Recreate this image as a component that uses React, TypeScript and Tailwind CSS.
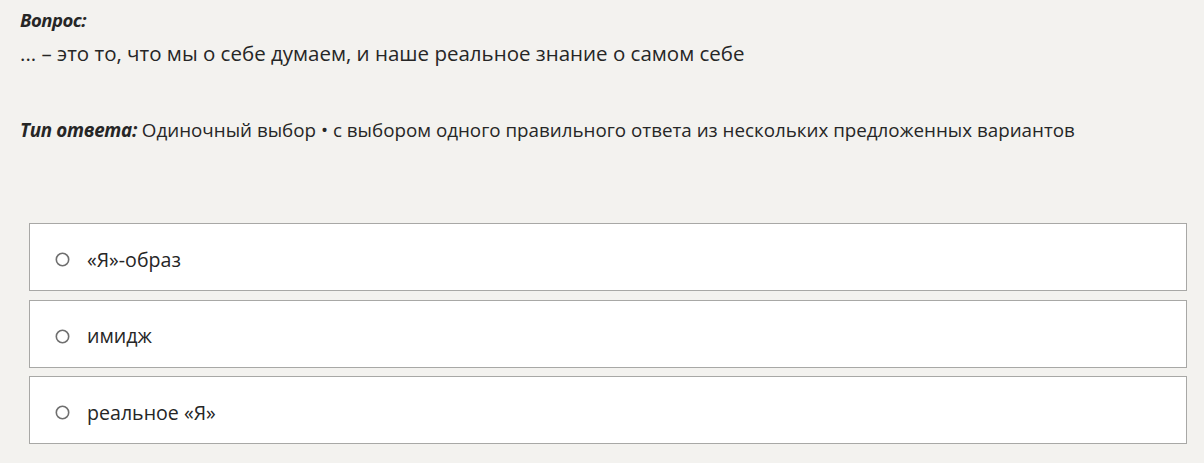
export default function App() {
  const options = ["«Я»-образ", "имидж", "реальное «Я»"];
  return (
    <div
      className="w-[1204px] h-[463px] bg-[#f3f2ef] text-[#262626] overflow-hidden"
      style={{ fontFamily: '"Open Sans", "Noto Sans", sans-serif' }}
    >
      <div className="pl-[20px] pt-[6px]">
        <div className="text-[18.5px] leading-[28px] font-bold italic tracking-[-0.5px]">Вопрос:</div>
        <div className="mt-[4px] text-[20.5px] leading-[30px]">
          ... – это то, что мы о себе думаем, и наше реальное знание о самом себе
        </div>
        <div className="mt-[48px] text-[18.8px] leading-[28px]">
          <span className="font-bold italic tracking-[-0.3px]">Тип ответа:</span> Одиночный выбор • с выбором одного правильного ответа из нескольких предложенных вариантов
        </div>
      </div>
      <div className="mt-[79px] ml-[29px] w-[1158px] flex flex-col gap-[8.5px]">
        {options.map((o) => (
          <div
            key={o}
            className="h-[68px] bg-white border border-[#a8a8a6] flex items-center pl-[25px] pt-[5px]"
          >
            <svg width="15" height="15" viewBox="0 0 15 15" className="shrink-0 mr-[17px]">
              <circle cx="7.5" cy="7.5" r="6.2" fill="none" stroke="#6f6f6f" strokeWidth="1.6" />
            </svg>
            <span className="text-[19.6px] leading-[28px]">{o}</span>
          </div>
        ))}
      </div>
    </div>
  );
}
